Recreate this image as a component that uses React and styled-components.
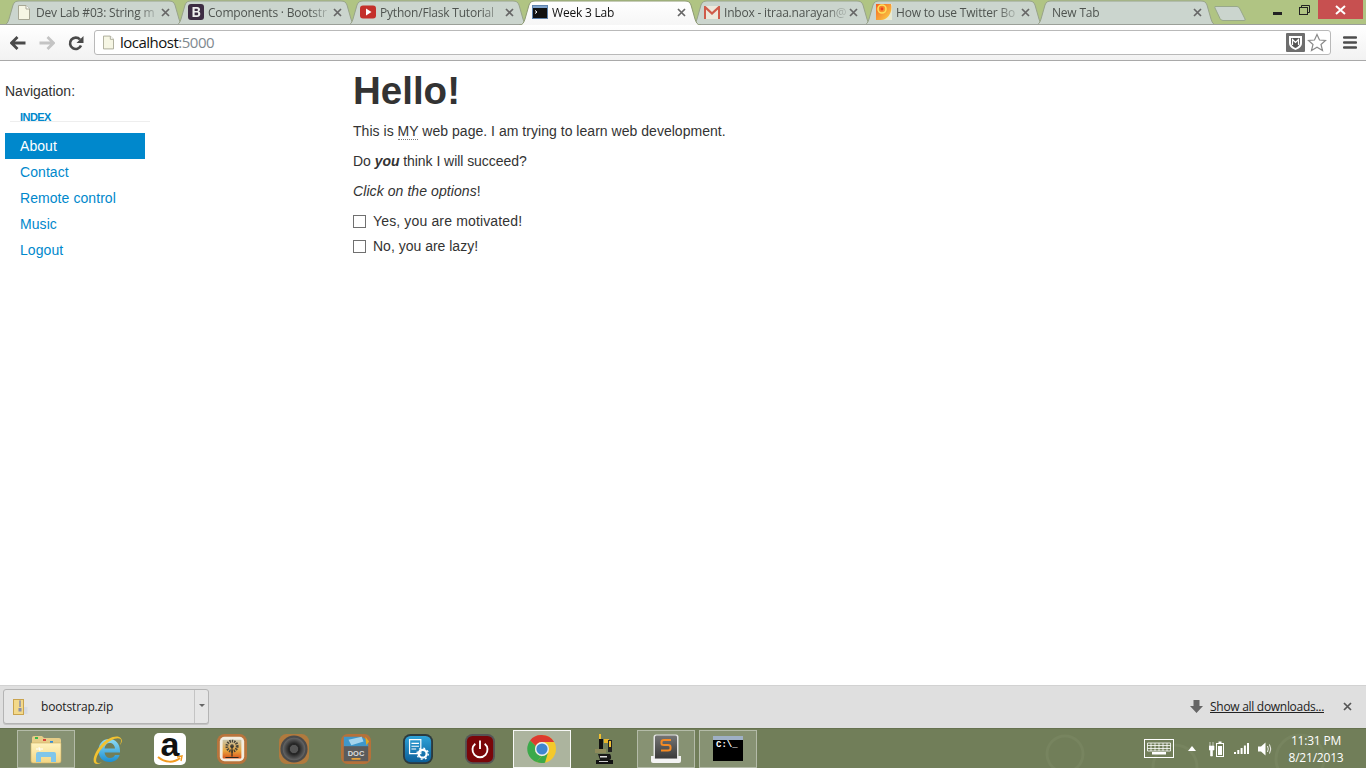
import React from "react";
import styled, { createGlobalStyle } from "styled-components";

const Global = createGlobalStyle`
  html, body { margin: 0; padding: 0; height: 100%; overflow: hidden; background: #fff; }
  #root { height: 100%; }
  * { box-sizing: border-box; }
`;

const Shell = styled.div`
  height: 768px;
  display: flex;
  flex-direction: column;
  font-family: "Liberation Sans", Arial, sans-serif;
`;

/* ---------- tab strip ---------- */

const Strip = styled.div`
  position: relative;
  height: 25px;
  flex: none;
  display: flex;
  background: #b0c483;
  padding-left: 3px;
  &::after {
    content: "";
    position: absolute;
    left: 0;
    right: 0;
    bottom: 0;
    height: 1px;
    background: #9a9f98;
    z-index: 1;
  }
`;

const Tab = styled.div`
  position: relative;
  flex: none;
  width: 182px;
  height: 25px;
  margin-right: -10px;
  display: flex;
  align-items: center;
  padding: 1px 0 2px ${(p) => (p.$noIcon ? "17px" : "13px")};
  z-index: ${(p) => (p.$active ? 2 : "auto")};
`;

const TabShape = styled.svg`
  position: absolute;
  left: 0;
  top: 0;
`;

const Favicon = styled.span`
  position: relative;
  width: 16px;
  height: 16px;
  flex: none;
  margin-right: 4px;
  display: flex;
`;

const TabTitle = styled.span`
  position: relative;
  width: 124px;
  flex: none;
  overflow: hidden;
  white-space: nowrap;
  font: 12px "Open Sans", "Noto Sans", sans-serif;
  letter-spacing: -0.2px;
  color: ${(p) => (p.$active ? "#111" : "#4f5450")};
  mask-image: linear-gradient(to right, #000 82%, rgba(0, 0, 0, 0.25) 96%);
`;

const TabClose = styled.svg`
  position: absolute;
  left: 158px;
  top: 8px;
`;

const NewTab = styled.svg`
  flex: none;
  margin: 5px 0 0 7px;
  position: relative;
`;

const WindowControls = styled.div`
  margin-left: auto;
  margin-right: 3px;
  height: 19px;
  display: flex;
  align-items: flex-start;
`;

const WinButton = styled.div`
  width: ${(p) => p.$w}px;
  height: 19px;
  display: flex;
  align-items: center;
  justify-content: center;
  background: ${(p) => (p.$close ? "#c75050" : "transparent")};
`;

/* ---------- toolbar ---------- */

const Toolbar = styled.div`
  height: 36px;
  flex: none;
  display: flex;
  align-items: center;
  padding: 0 3px;
  background: linear-gradient(#ffffff, #f2f2f2);
  border-bottom: 1px solid #a9a9a9;
`;

const NavButton = styled.div`
  width: 29px;
  height: 30px;
  flex: none;
  display: flex;
  align-items: center;
  justify-content: center;
`;

const Omnibox = styled.div`
  flex: 1;
  height: 25px;
  margin: 0 2px 1px 4px;
  display: flex;
  align-items: center;
  padding: 0 3px 0 8px;
  background: #fff;
  border: 1px solid #b9b9b9;
  border-radius: 3px;
`;

const Url = styled.div`
  margin-left: 6px;
  flex: 1;
  font: 15px "Open Sans", "Noto Sans", sans-serif;
  letter-spacing: -0.5px;
  color: #111;
  span { color: #7f8a8f; }
`;

const StarIcon = styled.svg`
  margin-left: 1px;
`;

const MenuButton = styled.div`
  width: 30px;
  display: flex;
  justify-content: center;
  padding-left: 4px;
`;

/* ---------- page ---------- */

const Page = styled.div`
  flex: 1;
  min-height: 0;
  display: flex;
  background: #fff;
  color: #333;
  font-size: 14px;
  line-height: 20px;
`;

const Sidebar = styled.div`
  width: 353px;
  flex: none;
  padding: 20px 0 0 5px;
`;

const NavLabel = styled.div`
  height: 20px;
  margin-bottom: 10px;
`;

const NavHeader = styled.div`
  width: 140px;
  height: 11px;
  margin: 0 0 11px 5px;
  padding-left: 10px;
  border-bottom: 1px solid #eee;
  font-size: 11px;
  line-height: 13px;
  letter-spacing: -0.55px;
  font-weight: bold;
  color: #0088cc;
  text-transform: uppercase;
`;

const NavList = styled.ul`
  list-style: none;
  margin: 0;
  padding: 0;
  width: 140px;
`;

const NavItem = styled.li`
  height: 26px;
  line-height: 26px;
  padding-left: 15px;
  letter-spacing: 0.07px;
  color: ${(p) => (p.$active ? "#fff" : "#0088cc")};
  background: ${(p) => (p.$active ? "#0088cc" : "transparent")};
`;

const Main = styled.div`
  flex: 1;
  padding-top: 10px;
`;

const Heading = styled.h1`
  margin: 0 0 10px;
  font-size: 38.5px;
  line-height: 40px;
  font-weight: bold;
`;

const Para = styled.p`
  margin: 0 0 10px;
  letter-spacing: ${(p) => p.$track || 0}px;
`;

const Abbr = styled.abbr`
  border-bottom: 1px dotted #777;
  text-decoration: none;
`;

const CheckRow = styled.label`
  display: flex;
  align-items: center;
  gap: 7px;
  height: 20px;
  margin-bottom: 5px;
  letter-spacing: ${(p) => p.$track || 0}px;
`;

const Check = styled.input`
  appearance: none;
  width: 13px;
  height: 13px;
  margin: 0;
  background: #fff;
  border: 1px solid #707070;
`;

/* ---------- download bar ---------- */

const DownloadBar = styled.div`
  height: 43px;
  flex: none;
  display: flex;
  align-items: center;
  padding: 0 14px 1px 3px;
  background: #dfdfdf;
  border-top: 1px solid #d2d2d2;
`;

const DownloadItem = styled.div`
  width: 206px;
  height: 35px;
  display: flex;
  align-items: center;
  background: #e6e6e6;
  border: 1px solid #b4b4b4;
  border-radius: 3px;
  box-shadow: 0 1px 0 #c4c4c4;
`;

const FileName = styled.div`
  flex: 1;
  display: flex;
  align-items: center;
  padding-left: 9px;
  gap: 13px;
  font: 12px "Open Sans", "Noto Sans", sans-serif;
  letter-spacing: -0.15px;
  color: #222;
`;

const Caret = styled.div`
  width: 14px;
  height: 100%;
  flex: none;
  display: flex;
  align-items: center;
  justify-content: center;
  border-left: 1px solid #c4c4c4;
  &::before {
    content: "";
    border: 3px solid transparent;
    border-top: 3px solid #666;
    border-bottom: 0;
    margin-bottom: 3px;
  }
`;

const ShowAll = styled.div`
  margin-left: auto;
  display: flex;
  align-items: center;
  gap: 7px;
  font: 12px "Open Sans", "Noto Sans", sans-serif;
  letter-spacing: -0.29px;
  color: #222;
  span { text-decoration: underline; }
`;

const BarClose = styled.svg`
  margin-left: 19px;
`;

/* ---------- taskbar ---------- */

const Taskbar = styled.div`
  position: relative;
  height: 40px;
  flex: none;
  display: flex;
  align-items: center;
  padding-left: 15px;
  background: #717e59;
  border-top: 1px solid #667250;
  overflow: hidden;
`;

const Wallpaper = styled.svg`
  position: absolute;
  left: 1000px;
  top: 0;
`;

const TaskItem = styled.div`
  position: relative;
  width: 58px;
  height: 38px;
  margin: 0 2px;
  flex: none;
  display: flex;
  align-items: center;
  justify-content: center;
  background: ${(p) =>
    p.$state === "on" ? "rgba(255,255,255,.42)" : p.$state === "open" ? "rgba(255,255,255,.16)" : "transparent"};
  outline: ${(p) =>
    p.$state === "on" ? "1px solid rgba(255,255,255,.9)" : p.$state === "open" ? "1px solid rgba(255,255,255,.38)" : "none"};
  outline-offset: -1px;
`;

const Tray = styled.div`
  position: relative;
  margin-left: auto;
  display: flex;
  align-items: center;
  height: 100%;
`;

const TrayIcon = styled.svg`
  flex: none;
  margin-left: ${(p) => p.$gap || 0}px;
`;

const Clock = styled.div`
  width: 76px;
  margin-left: 5px;
  margin-right: 12px;
  text-align: center;
  font: 12px/17px "Open Sans", "Noto Sans", sans-serif;
  letter-spacing: -0.2px;
  color: #fff;
`;

/* ---------- drawings ---------- */

const tabPath =
  "M0.5 25 C4 25 5 22 6 19 L10 5 C11 2 13 1 16 1 H166 C169 1 171 2 172 5 L176 19 C177 22 178 25 181.5 25";

const TabBg = ({ active }) => (
  <TabShape width="182" height="25" viewBox="0 0 182 25">
    <defs>
      <linearGradient id="activeTab" x1="0" y1="0" x2="0" y2="1">
        <stop offset="0" stopColor="#fff" />
        <stop offset="1" stopColor="#f6f6f6" />
      </linearGradient>
    </defs>
    <path d={tabPath + " Z"} fill={active ? "url(#activeTab)" : "#cbd5ce"} stroke="none" />
    <path d={tabPath} fill="none" stroke={active ? "#8d9a73" : "#98a38a"} />
  </TabShape>
);

const CloseX = () => (
  <TabClose width="9" height="9" viewBox="0 0 9 9">
    <path d="M1 1 L8 8 M8 1 L1 8" stroke="#666" strokeWidth="1.7" />
  </TabClose>
);

const DocIcon = ({ w = 12, h = 15 }) => (
  <svg width={w} height={h} viewBox="0 0 12 15" style={{ margin: "auto" }}>
    <path d="M.5.5 H8 L11.5 4 V14.5 H.5 Z" fill="#f6f6e4" stroke="#a7a795" />
    <path d="M8 .5 V4 H11.5" fill="#fff" stroke="#a7a795" />
  </svg>
);

const BootstrapIcon = () => (
  <svg width="16" height="16" viewBox="0 0 16 16">
    <rect width="16" height="16" rx="3" fill="#3d2c43" />
    <path
      d="M4.5 3 H9.2 C11 3 12 4 12 5.5 C12 6.6 11.4 7.3 10.6 7.6 C11.7 7.9 12.3 8.7 12.3 9.9 C12.3 11.7 11 13 9 13 H4.5 Z M6.6 4.8 V7 H8.7 C9.5 7 9.9 6.6 9.9 5.9 C9.9 5.2 9.5 4.8 8.7 4.8 Z M6.6 8.6 V11.2 H8.9 C9.7 11.2 10.2 10.7 10.2 9.9 C10.2 9.1 9.7 8.6 8.9 8.6 Z"
      fill="#eee"
      fillRule="evenodd"
    />
  </svg>
);

const YoutubeIcon = () => (
  <svg width="16" height="16" viewBox="0 0 16 16">
    <rect y="1.5" width="16" height="13" rx="3" fill="#c4302b" />
    <path d="M6 4.5 L11.5 8 L6 11.5 Z" fill="#fff" />
  </svg>
);

const TerminalIcon = () => (
  <svg width="16" height="14" viewBox="0 0 16 14" style={{ marginTop: 1 }}>
    <rect x=".5" y=".5" width="15" height="13" fill="#111" stroke="#5f83ad" />
    <rect x="1" y="1" width="14" height="2" fill="#7fa3cc" />
    <path d="M3 5.5 L5 7 L3 8.5" stroke="#fff" fill="none" />
  </svg>
);

const GmailIcon = () => (
  <svg width="16" height="13" viewBox="0 0 16 13" style={{ marginTop: 2 }}>
    <rect width="16" height="13" fill="#ece8dc" />
    <path d="M0 13 V0 H1.5 L8 6 L14.5 0 H16 V13 H14 V3.5 L8 9 L2 3.5 V13 Z" fill="#cf5b4a" />
  </svg>
);

const BloggerIcon = () => (
  <svg width="16" height="16" viewBox="0 0 16 16">
    <defs>
      <linearGradient id="swirl" x1="0" y1="0" x2="1" y2="1">
        <stop offset="0" stopColor="#f4601f" />
        <stop offset="1" stopColor="#fbd84a" />
      </linearGradient>
    </defs>
    <rect width="16" height="16" fill="#e8ead2" />
    <path d="M0 0 H15 C17 8 12 16 5 16 H0 Z" fill="url(#swirl)" />
    <circle cx="6" cy="5" r="4" fill="none" stroke="#fde25c" strokeWidth="1.6" />
    <circle cx="6" cy="5" r="1.4" fill="#ed3f1c" />
  </svg>
);

const tabs = [
  { title: "Dev Lab #03: String m", icon: <DocIcon /> },
  { title: "Components · Bootstr", icon: <BootstrapIcon /> },
  { title: "Python/Flask Tutorial", icon: <YoutubeIcon /> },
  { title: "Week 3 Lab", icon: <TerminalIcon />, active: true },
  { title: "Inbox - itraa.narayan@", icon: <GmailIcon /> },
  { title: "How to use Twitter Bo", icon: <BloggerIcon /> },
  { title: "New Tab" },
];

const FolderIcon = () => (
  <svg width="32" height="30" viewBox="0 0 32 30">
    <defs>
      <linearGradient id="folderFront" x1="0" y1="0" x2="0" y2="1">
        <stop offset="0" stopColor="#fff3bf" />
        <stop offset="1" stopColor="#f3d684" />
      </linearGradient>
    </defs>
    <path d="M2 4 Q2 2 4 2 H12 L14 4 H29 Q31 4 31 6 V10 H2 Z" fill="#e6cd88" />
    <rect x="5" y="3" width="3" height="2" fill="#39b54a" />
    <rect x="13" y="5" width="3" height="2" fill="#d9453a" />
    <rect x="20" y="7" width="3" height="2" fill="#2f8fdc" />
    <path d="M1 9 H31 V27 Q31 29 29 29 H3 Q1 29 1 27 Z" fill="url(#folderFront)" stroke="#cfae63" strokeWidth=".6" />
    <path d="M6 28 V20 Q6 18 8 18 H24 Q26 18 26 20 V28 H21 V23 H11 V28 Z" fill="#7fc6ea" />
    <path d="M9 13 L10 17 M6 15 L13 15" stroke="#fff" strokeWidth="1" />
  </svg>
);

const IeIcon = () => (
  <svg width="32" height="32" viewBox="0 0 32 32">
    <defs>
      <linearGradient id="ieBlue" x1="0" y1="0" x2="0" y2="1">
        <stop offset="0" stopColor="#8fdcf5" />
        <stop offset="1" stopColor="#1b8fd2" />
      </linearGradient>
    </defs>
    <path
      d="M17 6 C23.5 6 28 10.5 28 18 V19.5 H12.5 C13 23 15 25 18 25 C20.5 25 22 24 23 22 H27.6 C26 26.7 22.5 29 17.5 29 C11 29 6.5 24.5 6.5 17.5 C6.5 10.5 11 6 17 6 Z M12.5 15.5 H23 C22.7 12 20.5 10 17.6 10 C15 10 13 12 12.5 15.5 Z"
      fill="url(#ieBlue)"
      fillRule="evenodd"
    />
    <path
      d="M29 5.5 C26 1.5 16 4 9 12 C3 19 0 27 2.5 30 C4 31.5 7 31 10 29.5 C7.5 30.2 5.3 30.2 4.5 29 C3 26.5 6 19.5 11.5 13.5 C18 6.5 25.5 3.5 28.5 6 C29.5 7.2 29 9.5 28 12 C30 9.5 30.5 7 29 5.5 Z"
      fill="#f2c230"
    />
  </svg>
);

const AmazonTile = styled.div`
  position: relative;
  width: 32px;
  height: 32px;
  border-radius: 5px;
  background: #fff;
  color: #111;
  font: bold 34px/22px "Liberation Sans", Arial, sans-serif;
  text-align: center;
`;

const AmazonSmile = styled.svg`
  position: absolute;
  left: 3px;
  top: 22px;
`;

const AmazonIcon = () => (
  <AmazonTile>
    a
    <AmazonSmile width="26" height="9" viewBox="0 0 26 9">
      <path d="M1 2 C8 8 17 8 23 3" fill="none" stroke="#f29a1f" strokeWidth="2" />
      <path d="M20 2 L25 1 L24 6" fill="none" stroke="#f29a1f" strokeWidth="1.4" />
    </AmazonSmile>
  </AmazonTile>
);

const PhotoIcon = () => (
  <svg width="30" height="30" viewBox="0 0 32 32">
    <defs>
      <linearGradient id="sunset" x1="0" y1="0" x2="0" y2="1">
        <stop offset="0" stopColor="#c8c4a8" />
        <stop offset=".6" stopColor="#e8a43c" />
        <stop offset="1" stopColor="#d9541c" />
      </linearGradient>
    </defs>
    <rect width="32" height="32" rx="8" fill="#b8743c" />
    <rect x="3" y="3" width="26" height="26" rx="5" fill="#f3ede0" />
    <rect x="6" y="6" width="20" height="20" rx="1" fill="url(#sunset)" />
    <circle cx="16" cy="13" r="5.5" fill="none" stroke="#4a463a" strokeWidth="3" strokeDasharray="1.5 1" />
    <circle cx="16" cy="13" r="2" fill="#4a463a" />
    <path d="M16 13 V24 M9 25 H23" stroke="#2c2820" strokeWidth="1.2" />
  </svg>
);

const SpeakerIcon = () => (
  <svg width="30" height="30" viewBox="0 0 32 32">
    <defs>
      <radialGradient id="cone">
        <stop offset="0" stopColor="#777" />
        <stop offset=".45" stopColor="#222" />
        <stop offset="1" stopColor="#666" />
      </radialGradient>
    </defs>
    <rect width="32" height="32" rx="8" fill="#b07a3e" />
    <circle cx="16" cy="16" r="14.5" fill="#4b4b4b" />
    <circle cx="16" cy="16" r="12" fill="url(#cone)" />
    <circle cx="16" cy="16" r="5" fill="#555" stroke="#222" />
  </svg>
);

const DocFolderIcon = () => (
  <svg width="30" height="30" viewBox="0 0 32 32">
    <rect width="32" height="32" rx="7" fill="#b5713a" />
    <path d="M3 3 H22 L29 7 V14 H3 Z" fill="#3f97c9" />
    <path d="M8 6 L22 3 L24 8 L11 12 Z" fill="#a5d4ec" />
    <path d="M26 3 L30 8 L27 12 Z" fill="#e5a91e" />
    <path d="M3 13 H29 V29 H3 Z" fill="#5c5c5c" />
    <text x="16" y="23" textAnchor="middle" fontSize="8" fontWeight="bold" fontFamily="Liberation Sans" fill="#ddd">
      DOC
    </text>
    <rect x="11" y="25.5" width="10" height="2" rx="1" fill="#e8a33a" />
  </svg>
);

const SettingsIcon = () => (
  <svg width="30" height="30" viewBox="0 0 32 32">
    <defs>
      <linearGradient id="blueTile" x1="0" y1="0" x2="0" y2="1">
        <stop offset="0" stopColor="#2fa3d9" />
        <stop offset="1" stopColor="#0c5f99" />
      </linearGradient>
    </defs>
    <rect width="32" height="32" rx="8" fill="#2c3a3e" />
    <rect x="2" y="2" width="28" height="28" rx="6" fill="url(#blueTile)" />
    <path d="M7 6 H19 V21 H7 Z" fill="none" stroke="#fff" strokeWidth="1.3" />
    <path d="M9 10 H17 M9 13 H17 M9 16 H14" stroke="#fff" strokeWidth="1.2" />
    <circle cx="21" cy="21" r="4.2" fill="none" stroke="#fff" strokeWidth="2.4" />
    <circle cx="21" cy="21" r="6" fill="none" stroke="#fff" strokeWidth="1.4" strokeDasharray="2 2.7" />
  </svg>
);

const PowerIcon = () => (
  <svg width="30" height="30" viewBox="0 0 32 32">
    <rect width="32" height="32" rx="8" fill="#555" />
    <rect x="2" y="2" width="28" height="28" rx="6" fill="#7a0609" />
    <path d="M11 10.5 A8 8 0 1 0 21 10.5" fill="none" stroke="#fff" strokeWidth="2" />
    <path d="M16 7 V16" stroke="#fff" strokeWidth="2" />
  </svg>
);

const ChromeIcon = () => (
  <svg width="30" height="30" viewBox="0 0 30 30">
    <circle cx="15" cy="15" r="14" fill="#f4c92b" />
    <path d="M15 1 A14 14 0 0 1 27.1 8 H15 A7 7 0 0 0 8.7 12 L3 6.5 A14 14 0 0 1 15 1 Z" fill="#dc3b30" />
    <path d="M3 6.5 L8.7 12 A7 7 0 0 0 15 22 L9.5 28 A14 14 0 0 1 3 6.5 Z" fill="#3ba94a" />
    <path d="M15 22 L9.5 28 A14 14 0 0 0 15 29 C16 29 17 28.9 18 28.7 L21 18.5 A7 7 0 0 1 15 22 Z" fill="#3ba94a" />
    <circle cx="15" cy="15" r="7" fill="#e8eef5" />
    <circle cx="15" cy="15" r="5.6" fill="#3f86cf" />
  </svg>
);

const MicroscopeIcon = () => (
  <svg width="20" height="32" viewBox="0 0 20 32">
    <rect x="5" y="1" width="2" height="5" fill="#f0c030" />
    <rect x="5" y="6" width="4" height="13" fill="#111" />
    <rect x="10" y="6" width="5" height="4" fill="#e8b52a" />
    <path d="M14 7 H18 V19 H14 Z" fill="#222" />
    <rect x="15" y="8" width="2" height="6" fill="#f0c030" />
    <path d="M1 16 H12 V20 H1 Z" fill="#8e8a5a" />
    <path d="M4 21 H16 C18 24 17 27 15 27 H6 Z" fill="#181818" />
    <path d="M2 27 H19 V31 H2 Z" fill="#111" />
    <rect x="6" y="23" width="7" height="1.5" fill="#ddd" />
    <rect x="5" y="28" width="9" height="1" fill="#ccc" />
  </svg>
);

const SublimeIcon = () => (
  <svg width="32" height="30" viewBox="0 0 32 30">
    <defs>
      <linearGradient id="subTile" x1="0" y1="0" x2="0" y2="1">
        <stop offset="0" stopColor="#757575" />
        <stop offset="1" stopColor="#3a3a3a" />
      </linearGradient>
    </defs>
    <path d="M1 22 H31 V27 Q31 29 29 29 H3 Q1 29 1 27 Z" fill="#f4f4f4" />
    <path d="M3.5 25 V3 Q3.5 .5 6 .5 H26 Q28.5 .5 28.5 3 V25 Z" fill="#e4e4e4" />
    <path d="M5 24.5 V3 Q5 1.5 6.5 1.5 H25.5 Q27 1.5 27 3 V24.5 Z" fill="url(#subTile)" />
    <path d="M21 6 H14 Q11.5 6 11.5 8 V9.5 Q11.5 11 14 11 H18 Q20.5 11 20.5 13 V14.5 Q20.5 16.5 18 16.5 H11" fill="none" stroke="#f58a23" strokeWidth="2" />
  </svg>
);

const CmdTile = styled.div`
  width: 30px;
  height: 25px;
  background: #000;
  border-top: 4px solid #9fb0c6;
  color: #fff;
  font: bold 9px/10px "Liberation Mono", monospace;
  padding-left: 3px;
  white-space: pre;
`;

const taskItems = [
  { icon: <FolderIcon />, state: "open" },
  { icon: <IeIcon /> },
  { icon: <AmazonIcon /> },
  { icon: <PhotoIcon /> },
  { icon: <SpeakerIcon /> },
  { icon: <DocFolderIcon /> },
  { icon: <SettingsIcon /> },
  { icon: <PowerIcon /> },
  { icon: <ChromeIcon />, state: "on" },
  { icon: <MicroscopeIcon /> },
  { icon: <SublimeIcon />, state: "open" },
  { icon: <CmdTile>{"C:\\_"}</CmdTile>, state: "open" },
];

export default function App() {
  return (
    <Shell>
      <Global />
      <Strip>
        {tabs.map((t) => (
          <Tab key={t.title} $active={t.active} $noIcon={!t.icon}>
            <TabBg active={t.active} />
            {t.icon && <Favicon>{t.icon}</Favicon>}
            <TabTitle $active={t.active}>{t.title}</TabTitle>
            <CloseX />
          </Tab>
        ))}
        <NewTab width="34" height="17" viewBox="0 0 34 17">
          <path d="M1 1.5 H23 Q25 1.5 26 4 L31 14 Q32 15.5 30 15.5 H9 Q7 15.5 6 13.5 L1 3 Q0.5 1.5 1 1.5 Z" fill="#cbd5ce" stroke="#98a88a" />
        </NewTab>
        <WindowControls>
          <WinButton $w={26}>
            <svg width="10" height="4" viewBox="0 0 10 4" style={{ marginTop: 6 }}>
              <rect y="1" width="9" height="3" fill="#222" />
            </svg>
          </WinButton>
          <WinButton $w={27}>
            <svg width="11" height="10" viewBox="0 0 11 10">
              <path d="M2.5 2.5 V.5 H10.5 V7.5 H8.5" fill="none" stroke="#222" />
              <rect x=".5" y="2.5" width="8" height="7" fill="none" stroke="#222" />
            </svg>
          </WinButton>
          <WinButton $w={45} $close>
            <svg width="11" height="10" viewBox="0 0 11 10">
              <path d="M1 1 L10 9 M10 1 L1 9" stroke="#fff" strokeWidth="2" />
            </svg>
          </WinButton>
        </WindowControls>
      </Strip>

      <Toolbar>
        <NavButton>
          <svg width="16" height="14" viewBox="0 0 16 14">
            <path d="M7.5 1 L1.5 7 L7.5 13 M2 7 H15.5" fill="none" stroke="#4a4a4a" strokeWidth="2.8" />
          </svg>
        </NavButton>
        <NavButton>
          <svg width="16" height="14" viewBox="0 0 16 14">
            <path d="M8.5 1 L14.5 7 L8.5 13 M14 7 H.5" fill="none" stroke="#c4c4c4" strokeWidth="2.8" />
          </svg>
        </NavButton>
        <NavButton>
          <svg width="16" height="16" viewBox="0 0 16 16">
            <path d="M13 10.5 A5.7 5.7 0 1 1 12 4.5" fill="none" stroke="#4a4a4a" strokeWidth="2.6" />
            <path d="M15.5 1 V8 H8.5 Z" fill="#4a4a4a" />
          </svg>
        </NavButton>
        <Omnibox>
          <DocIcon w={11} h={15} />
          <Url>
            localhost<span>:5000</span>
          </Url>
          <svg width="20" height="19" viewBox="0 0 20 19">
            <rect width="19" height="19" rx="1" fill="#6e6e6e" />
            <path d="M3 3 H16 V10 C16 14 12 16 9.5 17 C7 16 3 14 3 10 Z" fill="#fff" />
            <path d="M5 5 H14 V10 C14 12.5 11.5 14 9.5 15 C7.5 14 5 12.5 5 10 Z" fill="#555" />
            <path d="M6.5 12 V6.5 L9.5 9.5 L12.5 6.5 V12" fill="none" stroke="#fff" strokeWidth="1.2" />
          </svg>
          <StarIcon width="20" height="19" viewBox="0 0 20 19">
            <path d="M10 1.5 L12.5 7 L18.5 7.5 L14 11.5 L15.5 17.5 L10 14.3 L4.5 17.5 L6 11.5 L1.5 7.5 L7.5 7 Z" fill="#fff" stroke="#8a8a8a" strokeWidth="1.2" />
          </StarIcon>
        </Omnibox>
        <MenuButton>
          <svg width="14" height="13" viewBox="0 0 14 13">
            <path d="M1 1.5 H13 M1 6.5 H13 M1 11.5 H13" stroke="#4d4d4d" strokeWidth="2.4" strokeLinecap="round" />
          </svg>
        </MenuButton>
      </Toolbar>

      <Page>
        <Sidebar>
          <NavLabel>Navigation:</NavLabel>
          <NavHeader>Index</NavHeader>
          <NavList>
            <NavItem $active>About</NavItem>
            <NavItem>Contact</NavItem>
            <NavItem>Remote control</NavItem>
            <NavItem>Music</NavItem>
            <NavItem>Logout</NavItem>
          </NavList>
        </Sidebar>
        <Main>
          <Heading>Hello!</Heading>
          <Para $track={0.03}>
            This is <Abbr>MY</Abbr> web page. I am trying to learn web development.
          </Para>
          <Para $track={-0.05}>
            Do{" "}
            <b>
              <i>you</i>
            </b>{" "}
            think I will succeed?
          </Para>
          <Para $track={0.08}>
            <i>Click on the options</i>!
          </Para>
          <CheckRow $track={0.15}>
            <Check type="checkbox" />
            Yes, you are motivated!
          </CheckRow>
          <CheckRow>
            <Check type="checkbox" />
            No, you are lazy!
          </CheckRow>
        </Main>
      </Page>

      <DownloadBar>
        <DownloadItem>
          <FileName>
            <svg width="15" height="16" viewBox="0 0 15 16">
              <rect x=".5" y=".5" width="10" height="15" fill="#f3d98b" stroke="#c9a34e" />
              <rect x="11" y="8" width="3.5" height="7" fill="#d6dbe4" />
              <path d="M7 1 V8 M6 3 H8 M6 5 H8 M6 7 H8" stroke="#8a8ea8" />
              <rect x="5.5" y="9" width="3" height="3.5" fill="#8a8ea8" />
            </svg>
            bootstrap.zip
          </FileName>
          <Caret />
        </DownloadItem>
        <ShowAll>
          <svg width="13" height="13" viewBox="0 0 13 13">
            <path d="M3.5 0 H9.5 V6 H13 L6.5 13 L0 6 H3.5 Z" fill="#666" />
          </svg>
          <span>Show all downloads...</span>
        </ShowAll>
        <BarClose width="9" height="9" viewBox="0 0 9 9">
          <path d="M1 1 L8 8 M8 1 L1 8" stroke="#555" strokeWidth="1.7" />
        </BarClose>
      </DownloadBar>

      <Taskbar>
        <Wallpaper width="366" height="40" viewBox="0 0 366 40">
          <g fill="none" stroke="#77845f" strokeWidth="3">
            <circle cx="65" cy="25" r="18" />
            <circle cx="175" cy="38" r="22" />
            <circle cx="300" cy="30" r="24" />
          </g>
        </Wallpaper>
        {taskItems.map((it, i) => (
          <TaskItem key={i} $state={it.state}>
            {it.icon}
          </TaskItem>
        ))}
        <Tray>
          <TrayIcon width="30" height="19" viewBox="0 0 30 19">
            <rect x=".5" y=".5" width="29" height="18" fill="none" stroke="#fff" />
            <path d="M3.5 4 H26.5 V12 H3.5 Z M3.5 6.5 H26.5 M3.5 9.5 H26.5 M7 4 V12 M11 4 V12 M15 4 V12 M19 4 V12 M23 4 V12" fill="none" stroke="#fff" strokeWidth=".8" />
            <rect x="8" y="13" width="14" height="2.5" fill="#fff" />
          </TrayIcon>
          <TrayIcon $gap={14} width="8" height="5" viewBox="0 0 8 5">
            <path d="M4 0 L8 5 H0 Z" fill="#fff" />
          </TrayIcon>
          <TrayIcon $gap={13} width="15" height="16" viewBox="0 0 15 16">
            <path d="M1 1 V5 M4 1 V5 M0 5 H5 V9 H3.5 V15 H1.5 V9 H0 Z" fill="#fff" stroke="#fff" strokeWidth=".6" />
            <rect x="7.5" y="2.5" width="7" height="13" fill="none" stroke="#fff" />
            <rect x="9" y="5" width="4" height="9" fill="#fff" />
            <rect x="9.5" y="0.5" width="3" height="2" fill="#fff" />
          </TrayIcon>
          <TrayIcon $gap={10} width="15" height="11" viewBox="0 0 15 11">
            <path d="M0 9 H2 V11 H0 Z M3.3 7 H5.3 V11 H3.3 Z M6.6 5 H8.6 V11 H6.6 Z M9.9 2.5 H11.9 V11 H9.9 Z M13 0 H15 V11 H13 Z" fill="#fff" />
          </TrayIcon>
          <TrayIcon $gap={9} width="15" height="14" viewBox="0 0 15 14">
            <path d="M0 4.5 H3 L7.5 .5 V13.5 L3 9.5 H0 Z" fill="#fff" />
            <path d="M9.5 4 Q11 7 9.5 10 M11.5 2.5 Q14 7 11.5 11.5" fill="none" stroke="#fff" strokeWidth=".9" />
          </TrayIcon>
          <Clock>
            11:31 PM
            <br />
            8/21/2013
          </Clock>
        </Tray>
      </Taskbar>
    </Shell>
  );
}
